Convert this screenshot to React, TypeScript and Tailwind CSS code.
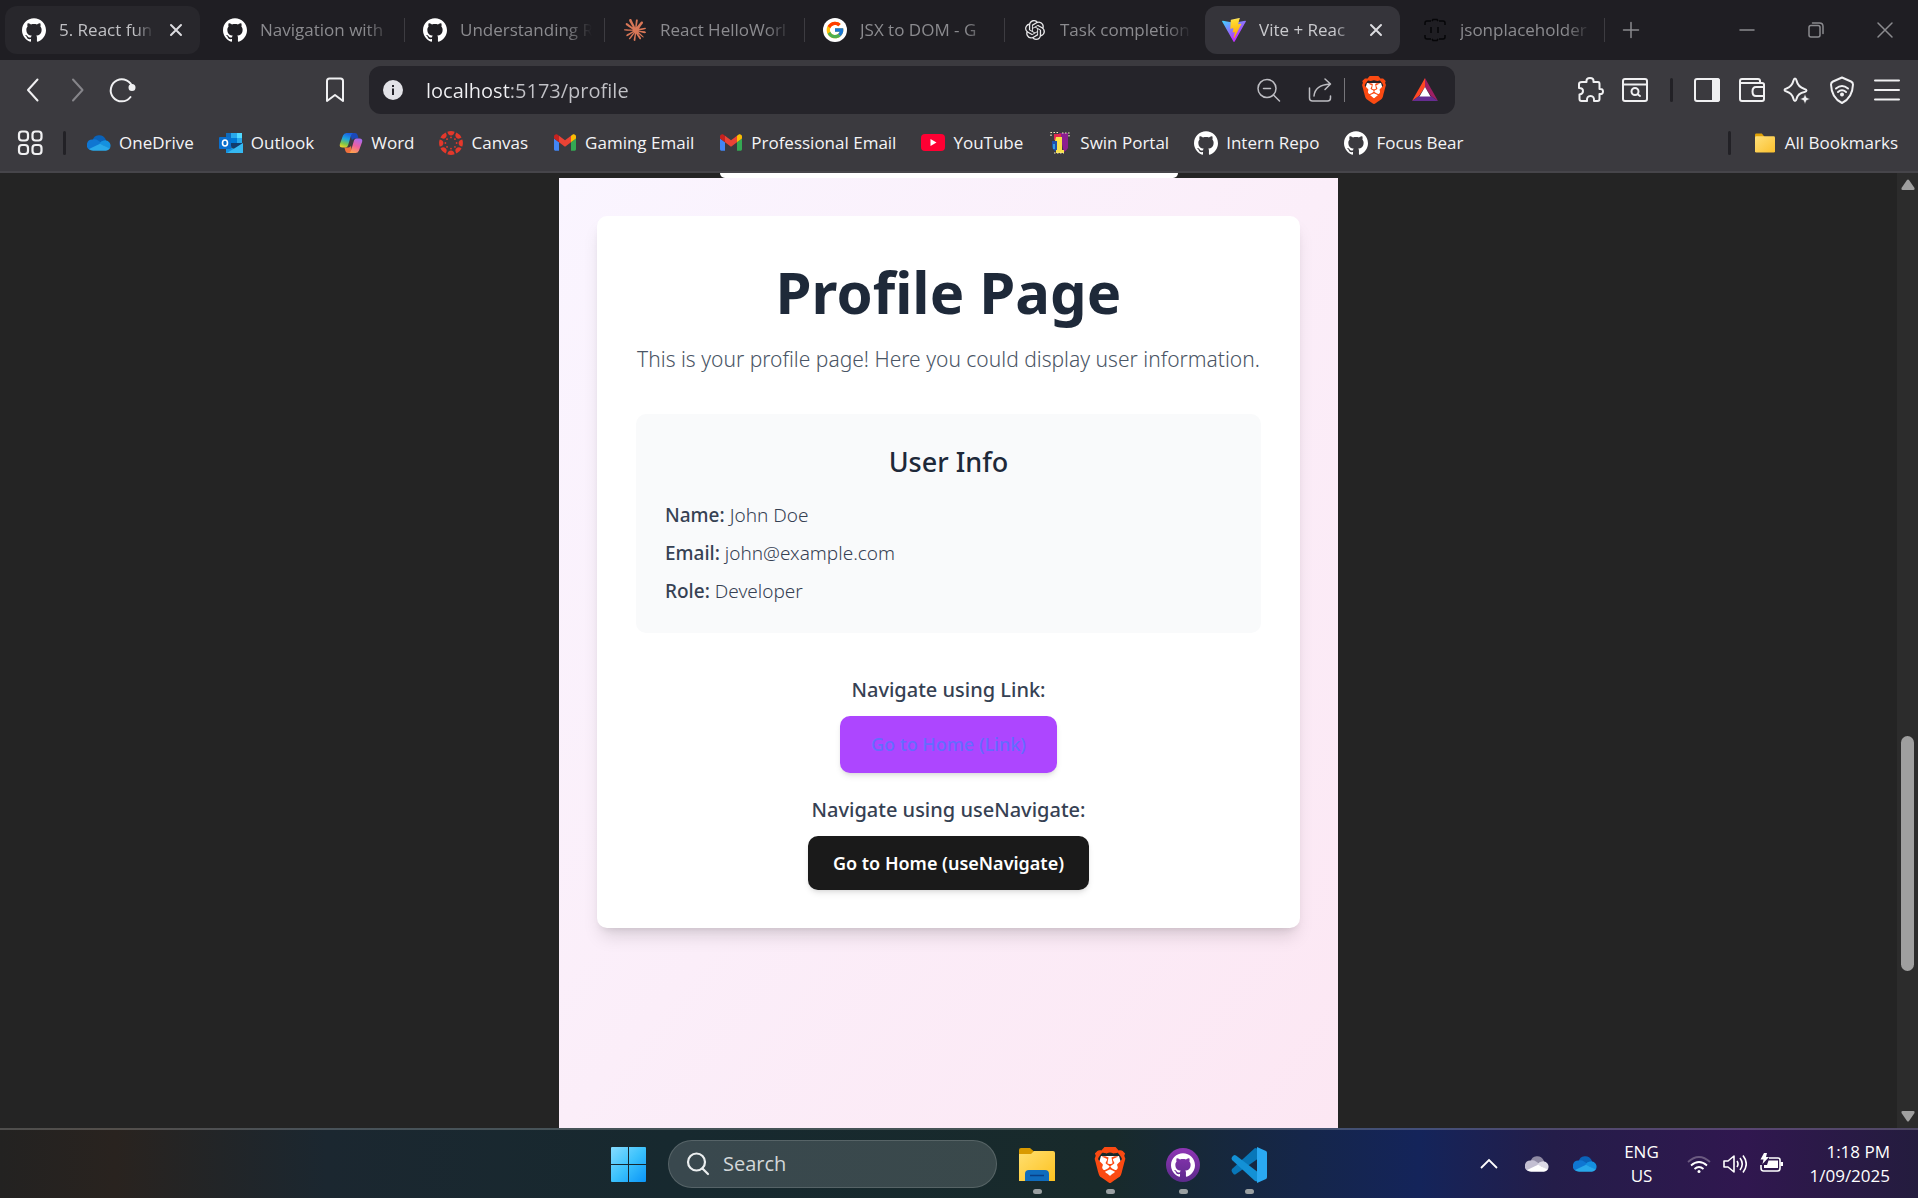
import type { ReactNode } from "react";
import { SiGithub, SiClaude, SiOpenai, SiBrave } from "react-icons/si";
import { FcGoogle } from "react-icons/fc";

const Github = () => <SiGithub className="size-6 text-white" />;

const Vite = () => (
  <svg viewBox="0 0 256 257" className="size-6">
    <defs>
      <linearGradient id="viteA" x1="0" y1="0.05" x2="0.55" y2="0.8">
        <stop offset="0" stopColor="#41D1FF" />
        <stop offset="1" stopColor="#BD34FE" />
      </linearGradient>
      <linearGradient id="viteB" x1="0.43" y1="0.02" x2="0.5" y2="0.9">
        <stop offset="0" stopColor="#FFEA83" />
        <stop offset="0.1" stopColor="#FFDD35" />
        <stop offset="1" stopColor="#FFA800" />
      </linearGradient>
    </defs>
    <path fill="url(#viteA)" d="M255.153 37.938L134.897 252.976c-2.483 4.44-8.862 4.466-11.382.048L.875 37.958c-2.746-4.814 1.371-10.646 6.827-9.67l120.385 21.517a6.537 6.537 0 0 0 2.322-.004l117.867-21.483c5.438-.991 9.574 4.796 6.877 9.62Z" />
    <path fill="url(#viteB)" d="M185.432.063L96.44 17.501a3.268 3.268 0 0 0-2.634 3.014l-5.474 92.456a3.268 3.268 0 0 0 3.997 3.378l24.777-5.718c2.318-.535 4.413 1.507 3.936 3.838l-7.361 36.047c-.495 2.426 1.782 4.5 4.151 3.78l15.304-4.649c2.372-.72 4.652 1.36 4.15 3.788l-11.698 56.621c-.732 3.542 3.979 5.473 5.943 2.437l1.313-2.028l72.516-144.72c1.215-2.423-.88-5.186-3.54-4.672l-25.505 4.922c-2.396.462-4.435-1.77-3.759-4.114l16.646-57.705c.677-2.35-1.37-4.583-3.769-4.113Z" />
  </svg>
);

const JsonIcon = () => (
  <svg viewBox="0 0 24 24" className="size-6" fill="none" stroke="#060608" strokeWidth="1.5">
    <path d="M2 7V5q0-2 2-2h4M9 3l1-1.500h4L15 3M16 3h4q2 0 2 2v2M2 17v2q0 2 2 2h4M9 21l1 1.500h4l1-1.500M16 21h4q2 0 2-2v-2M8 9v6M15 9v6" />
  </svg>
);

const BraveLion = ({ className }: { className: string }) => (
  <svg viewBox="0 0 24 24" className={className}>
    <path fill="#fff" d="M6 6h12l1.500 5L16 18l-4 3.500L8 18 4.500 11z" />
    <SiBrave size={24} color="#fb4a12" />
  </svg>
);

const Gmail = () => (
  <svg viewBox="52 42 88 66" className="h-[17px] w-[22px]">
    <path fill="#4285f4" d="M58 108h14V74L52 59v43c0 3.320 2.690 6 6 6" />
    <path fill="#34a853" d="M120 108h14c3.320 0 6-2.690 6-6V59l-20 15" />
    <path fill="#fbbc04" d="M120 48v26l20-15v-8c0-7.420-8.470-11.650-14.400-7.200" />
    <path fill="#ea4335" d="M72 74V48l24 18 24-18v26L96 92" />
    <path fill="#c5221f" d="M52 51v8l20 15V48l-5.600-4.200c-5.940-4.450-14.400-.220-14.400 7.200" />
  </svg>
);

const Cloud = ({ back, mid, front, side }: { back: string; mid: string; front: string; side: string }) => (
  <svg viewBox="0 0 24 16" className="h-4 w-6">
    <path fill={back} d="M5.500 5.500A7 7 0 0 1 18.500 4l1 3-6 2z" />
    <path fill={mid} d="M5.500 4.500A5.600 5.600 0 0 1 11 5.500l6 4L3 15A5.500 5.500 0 0 1 5.500 4.500z" />
    <path fill={side} d="M17 5.500a5.300 5.300 0 0 1 5.300 8.500l-10-5.500q2.200-3 4.700-3z" />
    <path fill={front} d="M2 14 13 8.800 22.800 13.500A5 5 0 0 1 19 15.700H6A5.800 5.800 0 0 1 2 14z" />
  </svg>
);
const OneDrive = () => <Cloud back="#0a62b8" mid="#0f76d2" front="#28a8ea" side="#1490df" />;

const Outlook = () => (
  <svg viewBox="0 0 24 24" className="size-6">
    <rect x="7" y="2" width="16" height="14" fill="#0f6cbd" />
    <path fill="#28a8ea" d="M12 2h6v5h-6z" />
    <path fill="#50d9ff" d="M18 2h5v5h-5z" />
    <path fill="#0078d4" d="M12 7h6v5h-6z" />
    <path fill="#28a8ea" d="M18 7h5v5h-5z" />
    <path fill="#123b6d" d="M7 12h17l-8 6z" />
    <path fill="#1490df" d="M7 14l17 8H7z" />
    <path fill="#35b8f1" d="M24 12v10H8z" />
    <rect x="0" y="6" width="12" height="12" rx="1" fill="#0a6fce" />
    <ellipse cx="6" cy="12" rx="2.500" ry="3" fill="none" stroke="#fff" strokeWidth="1.600" />
  </svg>
);

const Copilot = () => (
  <svg viewBox="0 0 24 24" className="size-6">
    <defs>
      <linearGradient id="cpA" x1="0.6" y1="0" x2="0.3" y2="1">
        <stop offset="0" stopColor="#1b5fe0" />
        <stop offset="0.4" stopColor="#1ba4e0" />
        <stop offset="0.75" stopColor="#7cc64a" />
        <stop offset="1" stopColor="#e9d32c" />
      </linearGradient>
      <linearGradient id="cpB" x1="0.7" y1="0" x2="0.3" y2="1">
        <stop offset="0" stopColor="#a66af0" />
        <stop offset="0.5" stopColor="#ee5fa0" />
        <stop offset="1" stopColor="#ffa34d" />
      </linearGradient>
    </defs>
    <path fill="#1a49b8" d="M11 2h5q2 0 2.600 2l1 3.500h-4q-2 0-2.600 2z" />
    <path fill="#f0703c" d="M13 22H9q-2 0-2.600-2l-1-3.500h4q2 0 2.600-2z" />
    <path fill="url(#cpA)" d="M7.500 2H14q-1.500.5-2 2.500l-3 10q-.6 2-2.600 2H3.500q-3.500 0-2.600-3.500L4 4.500Q5 2 7.500 2z" />
    <path fill="url(#cpB)" d="M16.500 22H10q1.500-.5 2-2.500l3-10q.6-2 2.600-2h2.900q3.500 0 2.600 3.500L20 19.500q-1 2.500-3.500 2.500z" />
  </svg>
);

const Canvas = () => (
  <svg viewBox="-12 -12 24 24" className="size-6" fill="#e4382b">
    {[0, 45, 90, 135, 180, 225, 270, 315].map((a) => (
      <g key={a} transform={`rotate(${a})`}>
        <path d="M-3.600-11.300Q0-12.500 3.600-11.300 3-7.600 0-7.600T-3.600-11.300z" />
        <circle cy="-5.600" r="0.900" />
      </g>
    ))}
  </svg>
);

const YouTube = () => (
  <svg viewBox="0 0 24 17" className="h-[19px] w-6">
    <rect width="24" height="17" rx="4" fill="#ff0033" />
    <path fill="#fff" d="M9.500 5v7l6-3.500z" />
  </svg>
);

const Swin = () => (
  <svg viewBox="0 0 20 24" className="h-6 w-5">
    <path fill="#8c1f8f" d="M9 2h9v15q-1 2-4 4z" />
    <path fill="#e02a50" d="M4 3h7v6H4z" />
    <path fill="#1c4fae" d="M2 10h6v11q-5-1-6-5z" />
    <path fill="#2f9be0" d="M3 13h2v5H3z" />
    <path fill="#f7e04a" d="M6 6h6v13h2v3H6v-3h1v-9H5z" />
    <path stroke="#f2e9c0" strokeWidth="1.200" strokeDasharray="1.500 1.500" fill="none" d="M1 5V1.500h7M12 2h7v4M4 22h10" />
  </svg>
);

const Folder = ({ className }: { className: string }) => (
  <svg viewBox="0 0 24 22" className={className}>
    <path fill="#e0a106" d="M1 2q0-1.500 1.500-1.500h6L11 3.500V7H1z" />
    <rect x="1" y="3.500" width="22" height="18" rx="1.500" fill="url(#fold)" />
    <defs>
      <linearGradient id="fold" x1="0" y1="0" x2="1" y2="1">
        <stop offset="0" stopColor="#ffe07a" />
        <stop offset="1" stopColor="#fbc02d" />
      </linearGradient>
    </defs>
  </svg>
);

const Line = ({ children, className = "size-7 text-[#f0f0f2]", w = 1.5 }: { children: ReactNode; className?: string; w?: number }) => (
  <svg viewBox="0 0 28 28" className={className} fill="none" stroke="currentColor" strokeWidth={w} strokeLinecap="round" strokeLinejoin="round">
    {children}
  </svg>
);

const IconButton = ({ label, children }: { label: string; children: ReactNode }) => (
  <button aria-label={label} className="flex size-7 shrink-0 items-center justify-center">
    {children}
  </button>
);

type TabInfo = { title: string; icon: ReactNode; kind?: "hover" | "active"; divider?: boolean };

const tabs: TabInfo[] = [
  { title: "5. React fun", icon: <Github />, kind: "hover" },
  { title: "Navigation with", icon: <Github />, divider: true },
  { title: "Understanding R", icon: <Github />, divider: true },
  { title: "React HelloWorl", icon: <SiClaude className="size-[22px] text-[#d97757]" />, divider: true },
  {
    title: "JSX to DOM - G",
    icon: (
      <span className="flex size-6 items-center justify-center rounded-full bg-white">
        <FcGoogle className="size-[20px]" />
      </span>
    ),
    divider: true,
  },
  { title: "Task completion", icon: <SiOpenai className="size-5 text-[#e8e8ea]" /> },
  { title: "Vite + Reac", icon: <Vite />, kind: "active" },
  { title: "jsonplaceholder", icon: <JsonIcon />, divider: true },
];

function Tab({ title, icon, kind, divider }: TabInfo) {
  const tone =
    kind === "active"
      ? "bg-[#35343a] pl-[17px] text-[#c9c9cd]"
      : kind === "hover"
        ? "bg-[#28272c] pl-[17px] text-[#c0c0c4]"
        : "pl-[18px] text-[#8b8b8f]";
  return (
    <div className="flex w-[200px] min-w-0 shrink items-center">
      <div className={"flex h-12 min-w-0 flex-1 items-center rounded-[12px] " + tone}>
        <button className="flex min-w-0 flex-1 items-center gap-[13px]">
          <span className="flex size-6 shrink-0 items-center justify-center">{icon}</span>
          <span className="min-w-0 flex-1 overflow-hidden text-left text-[17px] leading-6 whitespace-nowrap [mask-image:linear-gradient(to_right,black_80%,transparent)]">
            {title}
          </span>
        </button>
        {kind ? (
          <button aria-label={"Close " + title} className="mr-[10px] ml-2 flex size-7 items-center justify-center">
            <Line className="size-7 text-[#dcdce0]" w={2}>
              <path d="M9 9l10 10M19 9 9 19" />
            </Line>
          </button>
        ) : (
          <span className="w-2" />
        )}
      </div>
      <span className={divider ? "ml-1 h-6 w-px bg-[#3d3c41]" : "ml-1 w-px"} />
    </div>
  );
}

const bookmarks: { label: string; icon: ReactNode }[] = [
  { label: "OneDrive", icon: <OneDrive /> },
  { label: "Outlook", icon: <Outlook /> },
  { label: "Word", icon: <Copilot /> },
  { label: "Canvas", icon: <Canvas /> },
  { label: "Gaming Email", icon: <Gmail /> },
  { label: "Professional Email", icon: <Gmail /> },
  { label: "YouTube", icon: <YouTube /> },
  { label: "Swin Portal", icon: <Swin /> },
  { label: "Intern Repo", icon: <Github /> },
  { label: "Focus Bear", icon: <Github /> },
];

function BrowserChrome() {
  return (
    <header className="shrink-0">
      <div className="flex h-[60px] items-center bg-[#1f1e23] pl-[5px]">
        {tabs.map((t) => (
          <Tab key={t.title} {...t} />
        ))}
        <div className="ml-3">
          <IconButton label="New tab">
            <Line className="size-7 text-[#8b8b8f]">
              <path d="M14 6.500v15M6.500 14h15" />
            </Line>
          </IconButton>
        </div>
        <div className="ml-auto flex gap-[41px] pr-[19px] text-[#8b8b8f]">
          <IconButton label="Minimize">
            <Line className="size-7">
              <path d="M7 14h14" />
            </Line>
          </IconButton>
          <IconButton label="Restore">
            <Line className="size-7">
              <rect x="7" y="9.500" width="11" height="11.500" rx="2" />
              <path d="M10.500 7h7q3.500 0 3.500 3.500v7" />
            </Line>
          </IconButton>
          <IconButton label="Close">
            <Line className="size-7">
              <path d="M7 7l14 14M21 7 7 21" />
            </Line>
          </IconButton>
        </div>
      </div>

      <div className="flex h-[60px] items-center bg-[#3b3a3f] pl-[19px]">
        <div className="flex w-[350px] shrink-0 items-center">
          <IconButton label="Back">
            <Line w={2}>
              <path d="M18.500 3.500 9 14l9.500 10.500" />
            </Line>
          </IconButton>
          <div className="ml-[17px] flex">
            <IconButton label="Forward">
              <Line className="size-7 text-[#86858a]" w={2}>
                <path d="M9 3.500 18.500 14 9 24.500" />
              </Line>
            </IconButton>
          </div>
          <div className="ml-4 flex">
            <IconButton label="Reload">
              <Line w={2}>
                <path d="M24.500 12A11 11 0 1 0 22.500 21" />
                <circle cx="24" cy="11.500" r="2.500" fill="currentColor" />
              </Line>
            </IconButton>
          </div>
          <div className="mr-5 ml-auto flex">
            <IconButton label="Bookmark this page">
              <Line w={2}>
                <path d="M6 25V5q0-2.500 2.500-2.500h11Q22 2.500 22 5v20l-8-6z" />
              </Line>
            </IconButton>
          </div>
        </div>
        <div className="flex h-12 flex-1 items-center rounded-[12px] bg-[#25242a] pr-4 pl-[14px]">
          <svg viewBox="0 0 20 20" className="size-5 shrink-0">
            <circle cx="10" cy="10" r="10" fill="#e2e2e7" />
            <path d="M9 8.500h2V15H9zM9 5h2v2H9z" fill="#25242a" />
          </svg>
          <input
            aria-label="Address"
            defaultValue="localhost:5173/profile"
            className="ml-[23px] min-w-0 flex-1 bg-[linear-gradient(90deg,#f1f1f4_84px,#c2c2c7_84px)] bg-clip-text pt-px text-[20px] leading-8 text-transparent outline-none"
          />
          <IconButton label="Zoom">
            <Line className="size-7 text-[#bdbdc2]">
              <circle cx="12" cy="12.500" r="9" />
              <path d="M8.500 12.500h7M18.500 19l6 6" />
            </Line>
          </IconButton>
          <div className="mr-[10px] ml-[23px] flex">
            <IconButton label="Share">
              <Line className="size-7 text-[#bdbdc2]">
                <path d="M3.500 12v10q0 3 3 3h15q3 0 3-3v-2M8 20q1-11 16-12M19 3l5.500 5-5.500 5.500" />
              </Line>
            </IconButton>
          </div>
          <span className="h-6 w-px bg-[#77767b]" />
          <div className="ml-[15px] flex gap-[23px]">
            <IconButton label="Brave Shields">
              <BraveLion className="size-7" />
            </IconButton>
            <IconButton label="Brave Rewards">
              <svg viewBox="0 0 28 28" className="size-7">
                <path fill="#ff4724" d="M14 2v9L8 20 1 25z" />
                <path fill="#9e1f63" d="M14 2l13 23-7-5-6-9z" />
                <path fill="#662d91" d="M1 25l7-5h12l7 5z" />
                <path fill="#fff" d="M14 11l5.500 9.500h-11z" />
              </svg>
            </IconButton>
          </div>
        </div>
        <div className="flex w-[463px] shrink-0 items-center justify-end pr-[17px]">
          <IconButton label="Extensions">
            <Line w={2}>
              <path d="M6 6h4.500Q10 2 14 2t3.500 4H22q1.500 0 1.500 2v5q3.500-.5 3.500 2.500T23.500 18v5q0 2-2 2H18q.5-5-3.500-5T11 25H5.500q-2 0-2-2v-4.500Q7 18 7 15t-4-3V8q0-2 3-2z" />
            </Line>
          </IconButton>
          <div className="ml-[17px] flex">
            <IconButton label="Find in page">
              <Line w={2}>
                <rect x="2" y="3" width="24" height="22" rx="2" />
                <path d="M2 8.500h24" />
                <circle cx="14" cy="15.500" r="3.500" />
                <path d="M17 18.500l2 1.500" />
              </Line>
            </IconButton>
          </div>
          <span className="mr-5 ml-[21px] h-6 w-[3px] rounded bg-[#222126]" />
          <div className="flex gap-[17px]">
            <IconButton label="Sidebar">
              <Line w={2}>
                <rect x="2" y="3" width="24" height="22" rx="2" />
                <path d="M20 3h4q2 0 2 2v18q0 2-2 2h-4z" fill="currentColor" />
              </Line>
            </IconButton>
            <IconButton label="Wallet">
              <Line w={2}>
                <path d="M26 11V8.500Q26 7 24 7H2M22 7V5q0-2-2-2H4Q2 3 2 5v18q0 2 2 2h20q2 0 2-2v-3" />
                <path d="M26 11h-8q-3.500 0-3.500 4.500T18 20h8z" />
              </Line>
            </IconButton>
            <IconButton label="Leo AI">
              <Line w={2}>
                <path d="M12 2.500q1 0 1.500 2 1.500 6.500 8 8.500 2 .5 2 1.500t-2 1.500q-6.500 1-8 7-.5 2-1.500 2t-1.500-2q-1.500-6-7-7.500-2-.5-2-1.500t2-1.500q5.500-2 7-8 .5-2 1.500-2z" />
                <path d="M22 18l1.500 3.500L27 23l-3.500 1.500L22 28l-1.500-3.500L17 23l3.500-1.500z" fill="currentColor" stroke="#3b3a3f" strokeWidth="0.500" />
              </Line>
            </IconButton>
            <IconButton label="VPN">
              <Line w={2}>
                <path d="M14 1.500l9 4q2 1 2 3-.5 13.500-11 18.500Q3.500 22 3 8.500q0-2 2-3z" />
                <path d="M8 12.500q6-5 12 0M10 16q4-3.500 8 0" />
                <circle cx="14" cy="18.500" r="1" fill="currentColor" />
              </Line>
            </IconButton>
            <IconButton label="Menu">
              <Line w={2}>
                <path d="M2 4.500h24M2 14h24M2 23.500h24" />
              </Line>
            </IconButton>
          </div>
        </div>
      </div>

      <nav aria-label="Bookmarks" className="flex h-[53px] items-center border-b-2 border-[#46454a] bg-[#3b3a3f] pr-5 pb-[6px] pl-4 text-[17px] leading-6 text-[#f4f4f6]">
        <IconButton label="All tabs">
          <Line w={2.2}>
            <rect x="3" y="2.500" width="9" height="9" rx="3" />
            <rect x="16.500" y="2.500" width="9" height="9" rx="3" />
            <rect x="3" y="16" width="9" height="9" rx="3" />
            <rect x="16.500" y="16" width="9" height="9" rx="3" />
          </Line>
        </IconButton>
        <span className="mr-[21px] ml-[19px] h-6 w-[3px] rounded bg-[#222126]" />
        <ul className="flex gap-[25px]">
          {bookmarks.map((b) => (
            <li key={b.label}>
              <a href="#bookmark" className="flex items-center gap-2 whitespace-nowrap">
                <span className="flex size-6 items-center justify-center">{b.icon}</span>
                {b.label}
              </a>
            </li>
          ))}
        </ul>
        <span className="mr-[22px] ml-auto h-6 w-[3px] rounded bg-[#222126]" />
        <a href="#all" className="flex items-center gap-2 whitespace-nowrap">
          <Folder className="h-5 w-6" />
          All Bookmarks
        </a>
      </nav>
    </header>
  );
}

const userInfo = [
  ["Name:", "John Doe"],
  ["Email:", "john@example.com"],
  ["Role:", "Developer"],
];

function ProfilePage() {
  return (
    <main className="flex min-w-0 flex-1 flex-col items-center bg-[#242424] font-['Noto_Sans',sans-serif]">
      <div className="h-[5px] w-[458px] rounded-b-[6px] bg-white" />
      <div className="flex w-[779px] flex-1 flex-col items-center bg-linear-to-br from-[#faf5ff] to-[#fce7f3] pt-[38px]">
        <section className="flex w-[703px] flex-col items-center rounded-[10px] bg-white px-[39px] pt-[39px] pb-[38px] shadow-[0_12px_18px_-4px_rgba(0,0,0,0.13),0_5px_8px_-5px_rgba(0,0,0,0.13)]">
          <h1 className="text-[58px] leading-[74px] font-bold text-[#1e2939]">Profile Page</h1>
          <p className="mt-[13px] text-[21px] leading-[34px] font-[350] whitespace-nowrap text-[#4a5565]">
            This is your profile page! Here you could display user information.
          </p>
          <div className="mt-[38px] w-full rounded-[10px] bg-[#f9fafb] px-[29px] py-7">
            <h2 className="text-center text-[27px] leading-10 font-medium text-[#1e2939]">User Info</h2>
            <div className="mt-[19px] flex flex-col gap-[10px] text-[19px] leading-7 font-[350] text-[#364153]">
              {userInfo.map(([k, v]) => (
                <p key={k}>
                  <strong className="font-medium">{k}</strong> {v}
                </p>
              ))}
            </div>
          </div>
          <h3 className="mt-[42px] text-[20px] leading-[30px] font-medium text-[#364153]">Navigate using Link:</h3>
          <a
            href="#home"
            className="mt-[11px] flex h-[57px] w-[217px] items-center justify-center rounded-[10px] bg-[#ad46ff] text-[18px] font-medium text-[#646cff] shadow-md"
          >
            Go to Home (Link)
          </a>
          <h3 className="mt-[22px] text-[20px] leading-[30px] font-medium text-[#364153]">Navigate using useNavigate:</h3>
          <button className="mt-[11px] h-[54px] w-[281px] rounded-[10px] bg-[#1a1a1a] text-[18px] font-semibold text-white shadow-md">
            Go to Home (useNavigate)
          </button>
        </section>
      </div>
    </main>
  );
}

function ScrollBar() {
  return (
    <div className="flex w-[21px] shrink-0 flex-col items-center bg-[#2c2c2c] py-[6px]">
      <svg viewBox="0 0 14 12" className="h-3 w-[14px]">
        <path d="M6 1q1-1 2 0l5.500 8q.5 2-1 2h-11q-1.500 0-1-2z" fill="#9f9f9f" />
      </svg>
      <span className="grow-[545]" />
      <span className="w-[13px] grow-[235] rounded-full bg-[#9f9f9f]" />
      <span className="grow-[139]" />
      <svg viewBox="0 0 14 12" className="h-3 w-[14px]">
        <path d="M6 11q1 1 2 0l5.500-8q.5-2-1-2h-11q-1.500 0-1 2z" fill="#9f9f9f" />
      </svg>
    </div>
  );
}

const AppButton = ({ label, children }: { label: string; children: ReactNode }) => (
  <button aria-label={label} className="flex w-9 flex-col items-center gap-[6px]">
    <span className="flex h-9 items-center justify-center">{children}</span>
    <span className="h-[5px] w-[9px] rounded-full bg-[#9aa0a2]" />
  </button>
);

function TaskBar() {
  return (
    <footer className="grid h-[70px] shrink-0 grid-cols-[1fr_auto_1fr] items-center border-t-2 border-white/20 bg-[linear-gradient(90deg,#232221_0%,#29231f_6%,#1b2730_17%,#17292f_35%,#182a2b_58%,#15264a_68%,#14245a_74%,#241d49_81%,#30174f_91%,#241c3e_100%)] bg-[#232221] bg-origin-border text-[17px] leading-6 text-white">
      <span />
      <div className="flex items-center pr-10">
        <button aria-label="Start" className="mr-[22px]">
          <svg viewBox="0 0 35 35" className="size-[35px]">
            <defs>
              <linearGradient id="win" x1="0" y1="0" x2="35" y2="35" gradientUnits="userSpaceOnUse">
                <stop offset="0" stopColor="#86dcff" />
                <stop offset="0.5" stopColor="#3cc2fc" />
                <stop offset="1" stopColor="#0a95f8" />
              </linearGradient>
            </defs>
            <path fill="url(#win)" d="M0 1q0-1 1-1h16v17H0zM18 0h16q1 0 1 1v16H18zM0 18h17v17H1q-1 0-1-1zM18 18h17v16q0 1-1 1H18z" />
          </svg>
        </button>
        <label className="mr-[22px] flex h-12 w-[329px] items-center rounded-full border border-white/15 bg-white/15 pl-[17px]">
          <svg viewBox="0 0 24 24" className="size-6" fill="none" stroke="#eceff0" strokeWidth="2.200" strokeLinecap="round">
            <circle cx="10.500" cy="10" r="8.500" />
            <path d="M16.500 16.500l5.500 5.500" />
          </svg>
          <input aria-label="Search" placeholder="Search" className="ml-[13px] w-40 text-[20px] leading-7 outline-none placeholder:text-[#d3d7d9]" />
        </label>
        <div className="flex gap-[37px] pt-3">
          <AppButton label="File Explorer">
            <svg viewBox="0 0 36 33" className="h-[33px] w-9">
              <path fill="#d99a00" d="M0 2q0-2 2-2h9l4 3.500V9H0z" />
              <path fill="url(#fexp)" d="M0 6h12l3-3h19q2 0 2 2v28H0z" />
              <path fill="#0f6cbd" d="M6 33v-7q0-4 4-4h16q4 0 4 4v7z" />
              <path stroke="#0a3f85" strokeWidth="1.500" d="M11 27.500h14" />
              <defs>
                <linearGradient id="fexp" x1="0" y1="0" x2="1" y2="1">
                  <stop offset="0" stopColor="#ffdf70" />
                  <stop offset="1" stopColor="#fdc220" />
                </linearGradient>
              </defs>
            </svg>
          </AppButton>
          <AppButton label="Brave">
            <BraveLion className="size-9" />
          </AppButton>
          <div className="-mr-[7px]">
            <AppButton label="GitHub Desktop">
              <span className="flex size-[34px] items-center justify-center rounded-full bg-linear-to-b from-[#8f35b5] to-[#5c2a8c]">
                <SiGithub className="size-6 text-white" />
              </span>
            </AppButton>
          </div>
          <AppButton label="Visual Studio Code">
            <svg viewBox="0 0 36 36" className="size-9">
              <path fill="#0877b9" d="M1 22 24 1l4 1v9L5 27q-1.500 1-2.500 0L1 25q-1-1.500 0-3z" />
              <path fill="#1391d6" d="M1 13q-1-1.500 0-3l1.500-1.500q1-1 2.500 0L28 26v9l-4-1z" />
              <path fill="#2aa9f2" d="M26 0l9 4q1 .5 1 2v24q0 1.500-1 2l-9 4z" />
            </svg>
          </AppButton>
        </div>
      </div>
      <div className="flex items-center justify-end pr-7">
        <button aria-label="Hidden icons" className="mr-[26px]">
          <svg viewBox="0 0 20 20" className="size-5" fill="none" stroke="#fff" strokeWidth="1.800">
            <path d="M2 14l8-8 8 8" />
          </svg>
        </button>
        <span className="mr-6">
          <Cloud back="#8f8aa3" mid="#c3bfd2" front="#fff" side="#dcdae6" />
        </span>
        <span className="mr-[26px]">
          <OneDrive />
        </span>
        <button className="mr-7 w-9 text-center">
          ENG
          <br />
          US
        </button>
        <button aria-label="Network, sound and battery" className="mr-[26px] flex items-center gap-3">
          <svg viewBox="0 0 24 24" className="size-6" fill="none" stroke="#fff" strokeWidth="1.800">
            <path stroke="#6b5a80" d="M1 10q11-10 22 0" />
            <path d="M4 13.500q8-7 16 0M7.500 17q4.500-4 9 0" />
            <circle cx="12" cy="19.500" r="1.500" fill="#fff" stroke="none" />
          </svg>
          <svg viewBox="0 0 24 24" className="size-6" fill="none" stroke="#fff" strokeWidth="1.600" strokeLinejoin="round">
            <path d="M1 9h4l6-5v16l-6-5H1zM14 9q2 3 0 6M17 6q4.500 6 0 12M20 3.500q6.500 8.500 0 17" />
          </svg>
          <svg viewBox="0 0 24 24" className="size-6">
            <path fill="none" stroke="#fff" strokeWidth="1.600" d="M10 6h9q2 0 2 2v8q0 3-2.500 3h-14Q2 19 2 16v-3" />
            <path fill="#fff" d="M9.500 8.500H19V16H5v-3h3zM21.500 10H24v4h-2.500zM5 1h3L7 5h3L3.500 12l1-4.500H1.500z" />
          </svg>
        </button>
        <button className="text-right">
          1:18 PM
          <br />
          1/09/2025
        </button>
      </div>
    </footer>
  );
}

export default function App() {
  return (
    <div className="flex min-h-screen flex-col bg-[#242424] font-['Open_Sans','Noto_Sans',sans-serif]">
      <BrowserChrome />
      <div className="flex flex-1">
        <ProfilePage />
        <ScrollBar />
      </div>
      <TaskBar />
    </div>
  );
}
